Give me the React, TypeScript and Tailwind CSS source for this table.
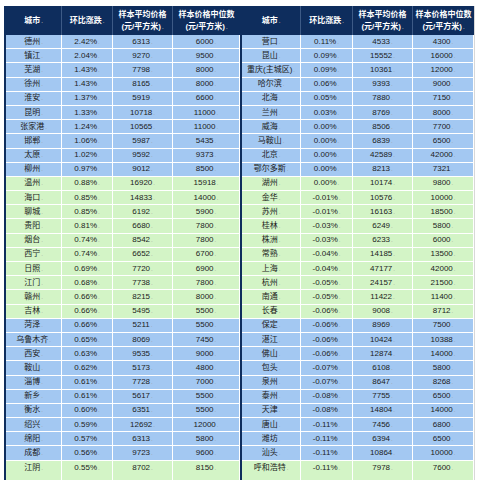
const left: [string, string, string, string][] = [
  ["德州", "2.42%", "6313", "6000"],
  ["镇江", "2.04%", "9270", "9500"],
  ["芜湖", "1.43%", "7798", "8000"],
  ["徐州", "1.43%", "8165", "8000"],
  ["淮安", "1.37%", "5919", "6600"],
  ["昆明", "1.33%", "10718", "11000"],
  ["张家港", "1.24%", "10565", "11000"],
  ["邯郸", "1.06%", "5987", "5435"],
  ["太原", "1.02%", "9592", "9373"],
  ["柳州", "0.97%", "9012", "8500"],
  ["温州", "0.88%", "16920", "15918"],
  ["海口", "0.85%", "14833", "14000"],
  ["聊城", "0.85%", "6192", "5900"],
  ["贵阳", "0.81%", "6680", "7800"],
  ["烟台", "0.74%", "8542", "7800"],
  ["西宁", "0.74%", "6652", "6700"],
  ["日照", "0.69%", "7720", "6900"],
  ["江门", "0.68%", "7738", "7800"],
  ["赣州", "0.66%", "8215", "8000"],
  ["吉林", "0.66%", "5495", "5500"],
  ["菏泽", "0.66%", "5211", "5500"],
  ["乌鲁木齐", "0.65%", "8069", "7450"],
  ["西安", "0.63%", "9535", "9000"],
  ["鞍山", "0.62%", "5173", "4800"],
  ["淄博", "0.61%", "7728", "7000"],
  ["新乡", "0.61%", "5617", "5500"],
  ["衡水", "0.60%", "6351", "5500"],
  ["绍兴", "0.59%", "12692", "12000"],
  ["绵阳", "0.57%", "6313", "5800"],
  ["成都", "0.56%", "9723", "9600"],
  ["江阴", "0.55%", "8702", "8150"],
];

const right: [string, string, string, string][] = [
  ["营口", "0.11%", "4533", "4300"],
  ["昆山", "0.09%", "15552", "16000"],
  ["重庆(主城区)", "0.09%", "10361", "12000"],
  ["哈尔滨", "0.06%", "9393", "9000"],
  ["北海", "0.05%", "7880", "7150"],
  ["兰州", "0.03%", "8769", "8000"],
  ["威海", "0.00%", "8506", "7700"],
  ["马鞍山", "0.00%", "6839", "6500"],
  ["北京", "0.00%", "42589", "42000"],
  ["鄂尔多斯", "0.00%", "8213", "7321"],
  ["湖州", "0.00%", "10174", "9800"],
  ["金华", "-0.01%", "10576", "10000"],
  ["苏州", "-0.01%", "16163", "18500"],
  ["桂林", "-0.03%", "6249", "5800"],
  ["株洲", "-0.03%", "6233", "6000"],
  ["常熟", "-0.04%", "14185", "13500"],
  ["上海", "-0.04%", "47177", "42000"],
  ["杭州", "-0.05%", "24157", "21500"],
  ["南通", "-0.05%", "11422", "11400"],
  ["长春", "-0.06%", "9008", "8712"],
  ["保定", "-0.06%", "8969", "7500"],
  ["湛江", "-0.06%", "10424", "10388"],
  ["佛山", "-0.06%", "12874", "14000"],
  ["包头", "-0.07%", "6108", "5800"],
  ["泉州", "-0.07%", "8647", "8268"],
  ["泰州", "-0.08%", "7755", "6500"],
  ["天津", "-0.08%", "14804", "14000"],
  ["唐山", "-0.11%", "7456", "6800"],
  ["潍坊", "-0.11%", "6394", "6500"],
  ["汕头", "-0.11%", "10864", "10000"],
  ["呼和浩特", "-0.11%", "7978", "7600"],
];

// rows come in bands of ten: blue, green, blue, then green again
function rowColor(i: number) {
  return Math.floor(i / 10) % 2 === 0 ? "bg-[#a3c8f2]" : "bg-[#d3f4c6]";
}

function Mark() {
  return <span className="ml-px text-[6px] text-[#9a9a9a]">.</span>;
}

function Half({ rows, widths }: { rows: [string, string, string, string][]; widths: number[] }) {
  const cols = widths.map((w) => ({ width: w }));
  return (
    <div className="flex flex-col">
      <div className="flex h-[29px] bg-[#0e2d5d] text-[8px] font-bold leading-[12px] text-white">
        {["城市", "环比涨跌"].map((t, i) => (
          <div key={t} style={cols[i]} className="flex items-center justify-center border-r border-[#3d5a86]">
            {t}
            <Mark />
          </div>
        ))}
        {["样本平均价格", "样本价格中位数"].map((t, i) => (
          <div
            key={t}
            style={cols[i + 2]}
            className="flex flex-col items-center justify-center border-r border-[#3d5a86] last:border-r-0"
          >
            <span>{t}</span>
            <span>
              (元/平方米)
              <Mark />
            </span>
          </div>
        ))}
      </div>
      {rows.map((r, i) => (
        <div
          key={r[0]}
          className={`flex h-[14.2px] text-[8px] leading-none text-[#1c1c1c] ${rowColor(i)} ${
            i < rows.length - 1 ? "border-b border-white" : ""
          }`}
        >
          {r.map((v, j) => (
            <div key={j} style={cols[j]} className="flex items-center justify-center border-r border-white">
              {v}
              <Mark />
            </div>
          ))}
        </div>
      ))}
      {/* the band carries on past the bottom of the shot */}
      <div className={`flex h-[14.2px] ${rowColor(rows.length - 1)}`}>
        {cols.map((c, j) => (
          <div key={j} style={c} className="border-r border-white" />
        ))}
      </div>
    </div>
  );
}

export default function App() {
  return (
    <div
      className="h-[480px] w-[480px] overflow-hidden bg-white pl-[4px] pt-[6px]"
      style={{ fontFamily: '"Liberation Sans", "Noto Sans CJK SC", sans-serif' }}
    >
      <div className="flex w-fit border-r border-[#d8d8d8]">
        <div className="w-[2px] bg-[#0e2d5d]" />
        <Half rows={left} widths={[56, 51, 60, 67]} />
        <div className="w-[2px] bg-[#0e2d5d]" />
        <Half rows={right} widths={[59, 52, 60, 61]} />
      </div>
    </div>
  );
}
